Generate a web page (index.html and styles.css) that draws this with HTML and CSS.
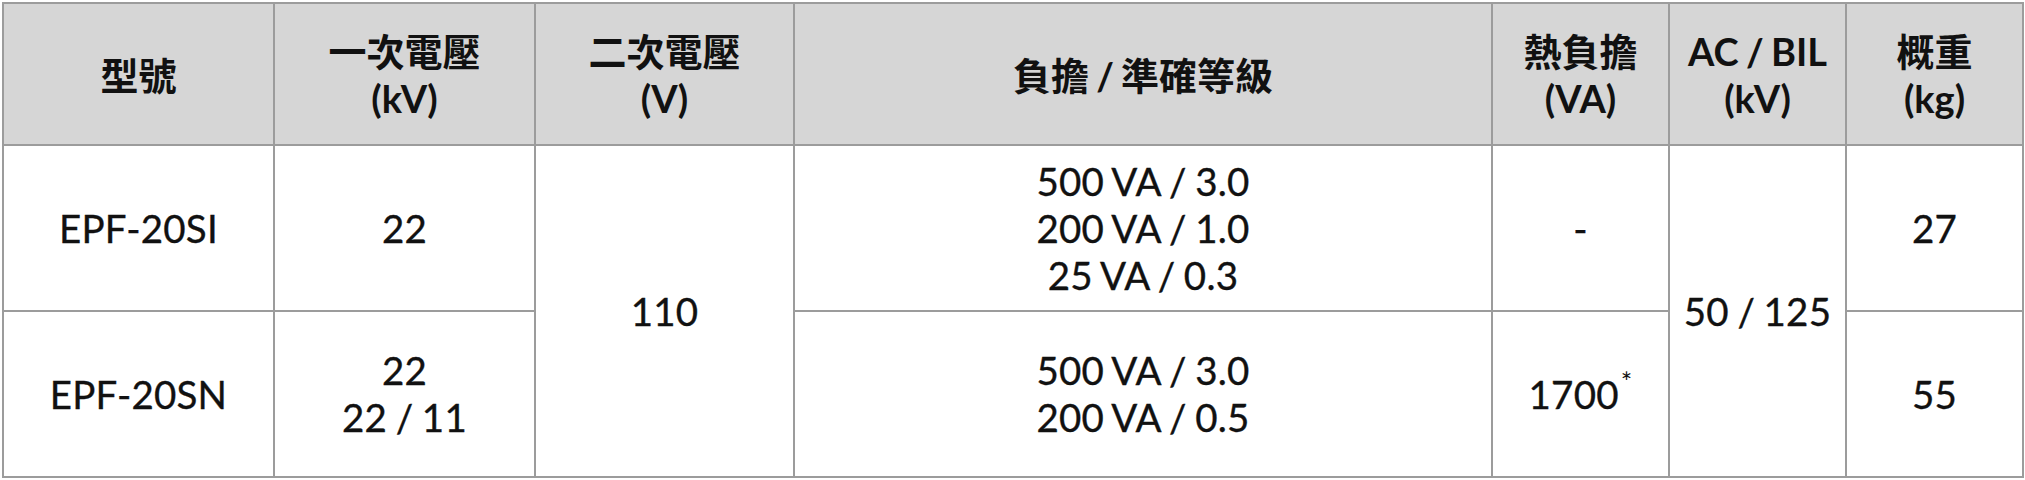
FILE: index.html
```html
<!DOCTYPE html>
<html lang="zh-Hant">
<head>
<meta charset="utf-8">
<title>規格表</title>
<link rel="stylesheet" href="styles.css">
</head>
<body>
<table class="spec">
  <colgroup>
    <col class="c-model">
    <col class="c-pri">
    <col class="c-sec">
    <col class="c-burden">
    <col class="c-thermal">
    <col class="c-bil">
    <col class="c-weight">
  </colgroup>
  <thead>
    <tr>
      <th>型號</th>
      <th>一次電壓<br>(kV)</th>
      <th>二次電壓<br>(V)</th>
      <th>負擔 / 準確等級</th>
      <th>熱負擔<br>(VA)</th>
      <th>AC / BIL<br>(kV)</th>
      <th>概重<br>(kg)</th>
    </tr>
  </thead>
  <tbody>
    <tr>
      <td>EPF-20SI</td>
      <td>22</td>
      <td rowspan="2">110</td>
      <td>500 VA / 3.0<br>200 VA / 1.0<br>25 VA / 0.3</td>
      <td>-</td>
      <td rowspan="2">50 / 125</td>
      <td>27</td>
    </tr>
    <tr>
      <td>EPF-20SN</td>
      <td>22<br>22 / 11</td>
      <td>500 VA / 3.0<br>200 VA / 0.5</td>
      <td>1700<sup class="note">*</sup></td>
      <td>55</td>
    </tr>
  </tbody>
</table>
</body>
</html>
```

FILE: styles.css
```css
html, body {
  margin: 0;
  padding: 0;
  background: #ffffff;
}

body {
  padding: 2px 0 0 2px;
  font-family: "Lato", "Noto Sans CJK TC", sans-serif;
  color: #111111;
}

.spec {
  border-collapse: collapse;
  table-layout: fixed;
  width: 2020px;
  line-height: 47px;
}

.c-model { width: 271px; }
.c-pri { width: 261px; }
.c-sec { width: 259px; }
.c-burden { width: 698px; }
.c-thermal { width: 177px; }
.c-bil { width: 177px; }
.c-weight { width: 177px; }

.spec th,
.spec td {
  border: 2px solid #9c9c9c;
  padding: 0;
  text-align: center;
  vertical-align: middle;
}

.spec th {
  background: #d6d6d6;
  font-family: "Lato", "Noto Sans CJK TC", sans-serif;
  font-size: 38px;
  font-weight: 700;
  word-spacing: -2px;
  height: 138px;
  padding-top: 2px;
}

.spec tbody tr {
  height: 166px;
}

.spec td {
  font-size: 38.5px;
  font-weight: 400;
  letter-spacing: 0.2px;
  word-spacing: -1.5px;
  -webkit-text-stroke: 0.35px #111111;
}

.note {
  font-size: 27px;
  line-height: 0;
  vertical-align: 17px;
  margin-left: 2px;
  -webkit-text-stroke: 0;
}
```
